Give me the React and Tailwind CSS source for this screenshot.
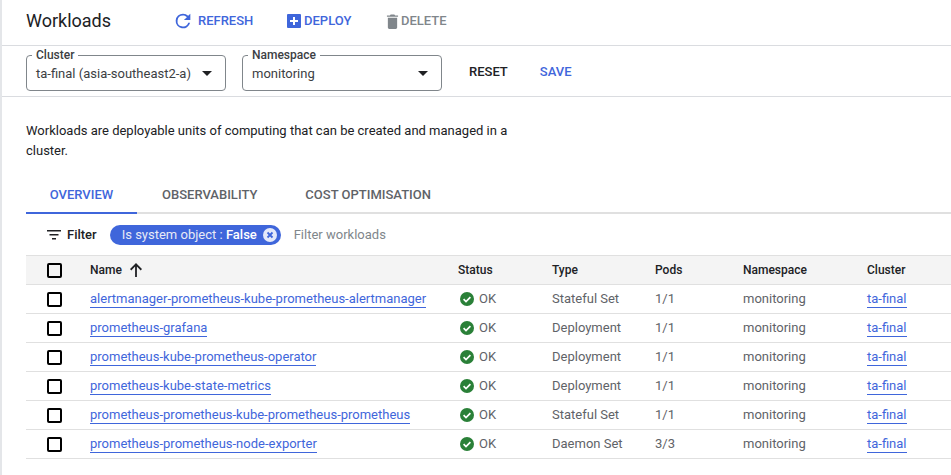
import React from 'react';

const rows = [
  ['alertmanager-prometheus-kube-prometheus-alertmanager', 'Stateful Set', '1/1'],
  ['prometheus-grafana', 'Deployment', '1/1'],
  ['prometheus-kube-prometheus-operator', 'Deployment', '1/1'],
  ['prometheus-kube-state-metrics', 'Deployment', '1/1'],
  ['prometheus-prometheus-kube-prometheus-prometheus', 'Stateful Set', '1/1'],
  ['prometheus-prometheus-node-exporter', 'Daemon Set', '3/3'],
];

const cols = 'grid grid-cols-[64px_368px_94px_103px_88px_124px_1fr] items-center';

function Checkbox() {
  return <div className="ml-[21px] w-[15px] h-[15px] border-2 border-black rounded-[2px]" />;
}

function Select({ label, value, width }) {
  return (
    <div className={`relative h-[36px] border border-[#80868b] rounded-[4px] flex items-center justify-between pl-[9px] pr-[13px] ${width}`}>
      <span className="absolute -top-[9px] left-[5px] bg-white px-1 text-[12px] leading-[16px] font-medium text-[#3c4043]">{label}</span>
      <span className="text-[13px] text-[#3c4043] pt-[1px]">{value}</span>
      <svg width="10" height="5" viewBox="0 0 10 5" className="fill-[#202124]"><path d="M0 0l5 5 5-5z" /></svg>
    </div>
  );
}

export default function App() {
  return (
    <div className="w-[951px] h-[475px] overflow-hidden bg-white border-l-2 border-[#e4e6e9] font-['Roboto',sans-serif] antialiased">
      {/* toolbar */}
      <div className="h-[46px] border-b border-[#dadce0] flex items-center pl-[24px] pb-[3px]">
        <h1 className="text-[18px] text-[#202124] w-[147px] leading-none">Workloads</h1>
        <button className="flex items-center text-[#3f66db] text-[13px] font-medium w-[114px]">
          <svg width="22" height="22" viewBox="0 0 24 24" className="fill-[#3f66db] mr-[4px] -ml-[1px]">
            <path d="M17.65 6.35A7.96 7.96 0 0 0 12 4a8 8 0 1 0 7.75 10h-2.08A6 6 0 1 1 12 6c1.66 0 3.14.69 4.22 1.78L13 11h7V4l-2.35 2.35z" />
          </svg>
          REFRESH
        </button>
        <button className="flex items-center text-[#3f66db] text-[13px] font-medium w-[99px]">
          <svg width="14" height="14" viewBox="0 0 14 14" className="mr-[3px]">
            <rect width="14" height="14" rx="1" fill="#3f66db" />
            <path d="M6 3h2v3h3v2H8v3H6V8H3V6h3z" fill="#fff" />
          </svg>
          DEPLOY
        </button>
        <button className="flex items-center text-[#80868b] text-[13px] font-medium">
          <svg width="13" height="15" viewBox="0 0 14 16" className="fill-[#80868b] mr-[2px]">
            <path d="M2 14.5c0 .8.7 1.5 1.5 1.5h7c.8 0 1.5-.7 1.5-1.5V4H2zM13 1.5H9.8L9 .5H5l-.8 1H1V3h12z" />
          </svg>
          DELETE
        </button>
      </div>

      {/* cluster and namespace */}
      <div className="h-[51px] border-b border-[#dadce0] flex items-center pl-[24px] pt-[4px]">
        <Select label="Cluster" value="ta-final (asia-southeast2-a)" width="w-[200px]" />
        <div className="w-[16px]" />
        <Select label="Namespace" value="monitoring" width="w-[200px]" />
        <button className="ml-[27px] text-[13px] font-medium text-[#202124] -mt-[3px]">RESET</button>
        <button className="ml-[32px] text-[13px] font-medium text-[#3f66db] -mt-[3px]">SAVE</button>
      </div>

      <p className="mt-[24px] ml-[24px] w-[500px] text-[13px] leading-[20px] text-[#202124]">
        Workloads are deployable units of computing that can be created and managed in a cluster.
      </p>

      {/* tabs */}
      <div className="mt-[15px] ml-[24px] h-[38px] border-b-2 border-[#e0e0e0] flex text-[13px] font-medium text-[#5f6368]">
        <div className="w-[111px] h-[38px] border-b-2 border-[#3f66db] text-[#3f66db] flex items-center justify-center pt-[1px]">OVERVIEW</div>
        <div className="ml-[25px] h-[36px] flex items-center pt-[1px]">OBSERVABILITY</div>
        <div className="ml-[48px] h-[36px] flex items-center pt-[1px]">COST OPTIMISATION</div>
      </div>

      {/* filter */}
      <div className="ml-[24px] h-[41px] flex items-center">
        <svg width="14" height="10" viewBox="0 0 14 10" className="ml-[21px] fill-[#202124]">
          <path d="M0 0h14v1.5H0zM2.5 4h9v1.5h-9zM5 8h4v1.5H5z" />
        </svg>
        <span className="ml-[6px] text-[13px] font-medium text-[#202124]">Filter</span>
        <div className="ml-[13px] h-[20px] w-[171px] rounded-full bg-[#3f66db] flex items-center pl-[12px] text-[13px] text-white">
          <span className="text-[#e8eaf6] whitespace-nowrap">Is system object :&nbsp;</span>
          <span className="font-medium">False</span>
          <svg width="14" height="14" viewBox="0 0 14 14" className="ml-[6px]">
            <circle cx="7" cy="7" r="7" fill="#e4e9fa" />
            <path d="M4.5 4.5l5 5M9.5 4.5l-5 5" stroke="#3f66db" strokeWidth="1.8" />
          </svg>
        </div>
        <span className="ml-[13px] text-[13px] text-[#80868b]">Filter workloads</span>
      </div>

      {/* table */}
      <div className="ml-[24px] text-[13px]">
        <div className={`${cols} h-[30px] bg-[#f4f4f4] border-y border-[#e0e0e0] font-medium text-[#202124] text-[12px]`}>
          <Checkbox />
          <div className="flex items-center">
            Name
            <svg width="14" height="14" viewBox="0 0 14 14" className="ml-[7px] fill-[#202124]">
              <path d="M7.9 14H6.1V3.6L2.3 7.4 1 6.1 7 0l6 6.1-1.3 1.3-3.8-3.8z" />
            </svg>
          </div>
          <div>Status</div>
          <div>Type</div>
          <div>Pods</div>
          <div>Namespace</div>
          <div>Cluster</div>
        </div>
        {rows.map(([name, type, pods]) => (
          <div key={name} className={`${cols} h-[29px] border-b border-[#e0e0e0] text-[#5f6368]`}>
            <Checkbox />
            <div><a className="text-[#3f66db] border-b border-[#3f66db] pb-[1px] whitespace-nowrap">{name}</a></div>
            <div className="flex items-center pl-[2px]">
              <svg width="14" height="14" viewBox="0 0 14 14" className="mr-[5px]">
                <circle cx="7" cy="7" r="7" fill="#2a8038" />
                <path d="M3.6 7.2l2.4 2.4 4.4-4.4" fill="none" stroke="#fff" strokeWidth="1.7" />
              </svg>
              OK
            </div>
            <div>{type}</div>
            <div>{pods}</div>
            <div>monitoring</div>
            <div><a className="text-[#3f66db] border-b border-[#3f66db] pb-[1px]">ta-final</a></div>
          </div>
        ))}
      </div>
    </div>
  );
}
